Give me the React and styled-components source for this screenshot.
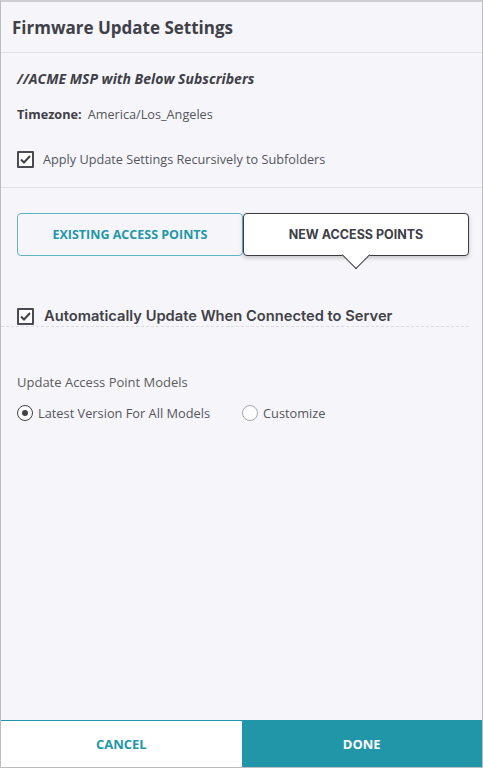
import * as React from 'react';
import styled, { createGlobalStyle } from 'styled-components';

const GlobalStyle = createGlobalStyle`
  * { box-sizing: border-box; }
  body {
    margin: 0;
    background: #f6f6fa;
    font-family: "Open Sans", "Liberation Sans", sans-serif;
    color: #404048;
  }
`;

const Frame = styled.div`
  height: 768px;
  display: flex;
  flex-direction: column;
  background: #f6f6fa;
  border: 1px solid #bcbcc0;
  border-top: 2px solid #cfcfd3;
`;

const Header = styled.div`
  height: 51px;
  flex: none;
  display: flex;
  align-items: center;
  padding: 0 11px;
  border-bottom: 1px solid #e1e1e6;
  font-size: 17px;
  font-weight: 700;
  color: #404048;
`;

const Section = styled.div`
  padding: 16px 16px 19px;
  border-bottom: 1px solid #e1e1e6;
`;

const Subscribers = styled.div`
  font-size: 14px;
  line-height: 20px;
  font-weight: 700;
  font-style: italic;
`;

const Timezone = styled.div`
  margin-top: 16px;
  font-size: 12.7px;
  line-height: 18px;
  color: #55555c;

  b {
    color: #404048;
    margin-right: 6px;
  }
`;

const CheckRow = styled.label`
  display: flex;
  align-items: center;
  gap: 9px;
  margin-top: ${(p) => p.$top || 0}px;
  font-size: 12.7px;
  line-height: 18px;
  color: #55555c;
`;

const Box = styled.span`
  width: 17px;
  height: 17px;
  flex: none;
  border: 2px solid #4a4a52;
  border-radius: 1px;
  display: flex;
  align-items: center;
  justify-content: center;
  background: #fff;
`;

const Tabs = styled.div`
  display: flex;
  padding: 25px 13px 0 16px;
`;

const Tab = styled.div`
  position: relative;
  flex: 1;
  height: 43px;
  display: flex;
  align-items: center;
  justify-content: center;
  border-radius: 4px;
  font-size: 12.5px;
  font-weight: 700;
  background: ${(p) => (p.$active ? '#fff' : 'transparent')};
  border: 1px solid ${(p) => (p.$active ? '#3c3c44' : '#5fb4c2')};
  color: ${(p) => (p.$active ? '#404048' : '#2396a9')};
  font-family: ${(p) => (p.$active ? 'Inter, "Open Sans", sans-serif' : '"Open Sans", sans-serif')};
  box-shadow: ${(p) => (p.$active ? '0 2px 4px rgba(0,0,0,0.2)' : 'none')};
  z-index: ${(p) => (p.$active ? 1 : 0)};
`;

const Pointer = styled.span`
  position: absolute;
  left: 50%;
  bottom: -10px;
  width: 20px;
  height: 20px;
  margin-left: -10px;
  background: #fff;
  border-right: 1px solid #3c3c44;
  border-bottom: 1px solid #3c3c44;
  transform: rotate(45deg);
`;

const AutoRow = styled.label`
  display: flex;
  align-items: center;
  gap: 10px;
  margin: 50px 13px 0 0;
  padding: 0 0 0 16px;
  height: 21px;
  border-bottom: 1px dashed #dcdce0;
  font-family: Inter, "Open Sans", sans-serif;
  font-size: 14.7px;
  font-weight: 600;
  color: #404048;
`;

const Models = styled.div`
  padding: 46px 16px 0;
`;

const ModelsLabel = styled.div`
  font-size: 13px;
  line-height: 18px;
  color: #5a5a60;
`;

const RadioRow = styled.div`
  display: flex;
  margin-top: 13px;
`;

const RadioOption = styled.label`
  display: flex;
  align-items: center;
  gap: 5px;
  width: ${(p) => p.$w || 'auto'};
  font-size: 12.8px;
  line-height: 18px;
  color: #55555c;
`;

const Radio = styled.span`
  width: 16px;
  height: 16px;
  flex: none;
  border-radius: 50%;
  border: 1.5px solid ${(p) => (p.$on ? '#404048' : '#a8a8ae')};
  background: #fff;
  display: flex;
  align-items: center;
  justify-content: center;

  &::after {
    content: '';
    width: 6px;
    height: 6px;
    border-radius: 50%;
    background: ${(p) => (p.$on ? '#404048' : 'transparent')};
  }
`;

const Spacer = styled.div`
  flex: 1;
`;

const Footer = styled.div`
  flex: none;
  height: 47px;
  display: flex;
  border-top: 1px solid #2396a9;
`;

const FooterButton = styled.button`
  flex: 1;
  border: none;
  font-family: "Open Sans", sans-serif;
  font-size: 13px;
  font-weight: 700;
  background: ${(p) => (p.$primary ? '#2196a9' : '#fff')};
  color: ${(p) => (p.$primary ? '#fff' : '#2396a9')};
`;

const Check = () => (
  <svg width="11" height="9" viewBox="0 0 11 9">
    <path d="M1 4.5 L4 7.5 L10 1" fill="none" stroke="#404048" strokeWidth="2" />
  </svg>
);

function App() {
  return (
    <Frame>
      <GlobalStyle />
      <Header>Firmware Update Settings</Header>
      <Section>
        <Subscribers>//ACME MSP with Below Subscribers</Subscribers>
        <Timezone>
          <b>Timezone:</b>America/Los_Angeles
        </Timezone>
        <CheckRow $top={27}>
          <Box>
            <Check />
          </Box>
          Apply Update Settings Recursively to Subfolders
        </CheckRow>
      </Section>
      <Tabs>
        <Tab>EXISTING ACCESS POINTS</Tab>
        <Tab $active>
          NEW ACCESS POINTS
          <Pointer />
        </Tab>
      </Tabs>
      <AutoRow>
        <Box>
          <Check />
        </Box>
        Automatically Update When Connected to Server
      </AutoRow>
      <Models>
        <ModelsLabel>Update Access Point Models</ModelsLabel>
        <RadioRow>
          <RadioOption $w="225px">
            <Radio $on />
            Latest Version For All Models
          </RadioOption>
          <RadioOption>
            <Radio />
            Customize
          </RadioOption>
        </RadioRow>
      </Models>
      <Spacer />
      <Footer>
        <FooterButton>CANCEL</FooterButton>
        <FooterButton $primary>DONE</FooterButton>
      </Footer>
    </Frame>
  );
}

export default App;
